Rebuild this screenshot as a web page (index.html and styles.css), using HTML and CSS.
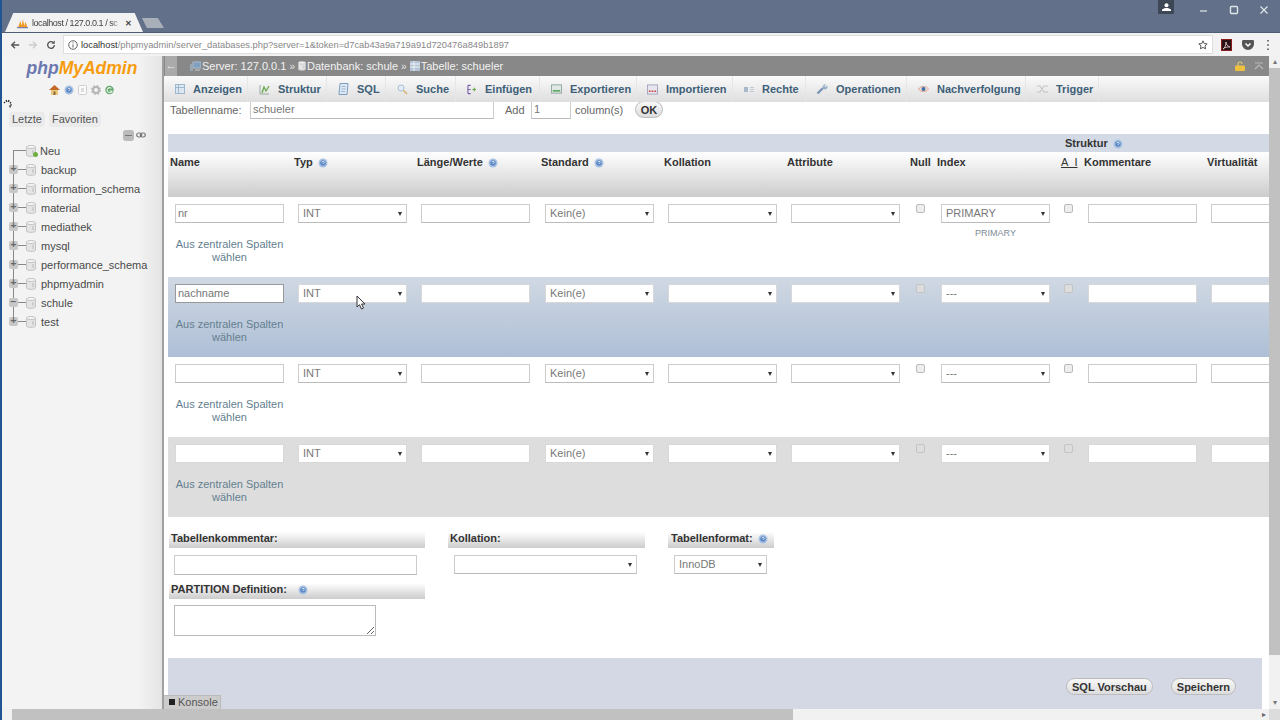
FILE: index.html
```html
<!DOCTYPE html>
<html lang="de">
<head>
    <meta charset="UTF-8">
    <meta name="viewport" content="width=device-width, initial-scale=1.0">
    <title>localhost / 127.0.0.1 / schule / schueler</title>
    <link rel="stylesheet" href="styles.css">
</head>
<body>
    <svg class="defs" width="0" height="0">
        <symbol id="help" viewBox="0 0 10 10">
            <circle cx="5" cy="5" r="4.5" fill="#a9c2e2"/>
            <circle cx="5" cy="5" r="2.8" fill="#5c8ac6"/>
            <path d="M3.8 4.200c.3-1.200 2.400-1.100 2.400.1 0 .8-1.200.8-1.200 1.600" fill="none" stroke="#fff" stroke-width=".8"/>
        </symbol>
        <symbol id="db" viewBox="0 0 10 12">
            <path d="M.5 2v8c0 1.800 9 1.800 9 0V2z" fill="#e4e4e4" stroke="#c4c4c4"/>
            <ellipse cx="5" cy="2" rx="4.5" ry="1.600" fill="#f4f4f4" stroke="#c4c4c4"/>
            <path d="M6 5h2v4H6z" fill="#cfcfcf"/>
        </symbol>
    </svg>

    <div class="titlebar">
        <div class="tab">
            <svg class="favicon" width="11" height="11" viewBox="0 0 13 12">
                <path d="M1 11 4 3l2 8zM5 11l2-10 2 10zM8 11l2-7 2.500 7z" fill="#f29a1e"/>
                <path d="M0 11h13" stroke="#7b7fa8" stroke-width="1.500"/>
            </svg>
            <span class="tabTitle">localhost / 127.0.0.1 / sc</span>
            <span class="tabClose">&#x2715;</span>
        </div>
        <div class="newTab"></div>
        <div class="windowControls">
            <div class="profile">
                <svg width="9" height="8" viewBox="0 0 9 8"><circle cx="4.500" cy="2.200" r="2" fill="#fff"/><path d="M0 8V6.500L3 5h3l3 1.500V8z" fill="#fff"/></svg>
            </div>
            <svg class="winIcon" width="10" height="10" viewBox="0 0 10 10"><path d="M1 6h7" stroke="#dfe4ea" stroke-width="1.200"/></svg>
            <svg class="winIcon" width="10" height="10" viewBox="0 0 10 10"><rect x="1.500" y="1.500" width="7" height="7" rx="1" fill="none" stroke="#dfe4ea" stroke-width="1.400"/></svg>
            <svg class="winIcon" width="10" height="10" viewBox="0 0 10 10"><path d="M1.500 1.500l7 7M8.500 1.500l-7 7" stroke="#dfe4ea" stroke-width="1.200"/></svg>
        </div>
    </div>

    <div class="toolbar">
        <svg class="navIcon" width="10" height="10" viewBox="0 0 12 12"><path d="M11 6H2M6 2 2 6l4 4" fill="none" stroke="#555" stroke-width="1.600"/></svg>
        <svg class="navIcon" width="10" height="10" viewBox="0 0 12 12"><path d="M1 6h9M6 2l4 4-4 4" fill="none" stroke="#ccc" stroke-width="1.600"/></svg>
        <svg class="navIcon" width="10" height="10" viewBox="0 0 12 12"><path d="M10 6a4 4 0 1 1-1.300-3" fill="none" stroke="#555" stroke-width="1.600"/><path d="M10.500 .5v4h-4z" fill="#555"/></svg>
        <div class="urlBox">
            <svg class="urlInfo" width="10" height="10" viewBox="0 0 11 11"><circle cx="5.500" cy="5.500" r="4.700" fill="none" stroke="#555"/><path d="M5.500 4.800v3.500M5.500 2.500v1.200" stroke="#555"/></svg>
            <span class="url"><b>localhost</b>/phpmyadmin/server_databases.php?server=1&amp;token=d7cab43a9a719a91d720476a849b1897</span>
            <svg class="star" width="10" height="10" viewBox="0 0 12 12"><path d="M6 1l1.500 3.300 3.500.4-2.600 2.400.7 3.500L6 8.900 2.900 10.600l.7-3.500L1 4.700l3.500-.4z" fill="none" stroke="#555" stroke-width="1.200"/></svg>
        </div>
        <div class="extensions">
            <svg width="11" height="12" viewBox="0 0 11 12"><rect width="11" height="12" fill="#8c1c1c"/><rect x="1" y="1" width="9" height="10" fill="#2a1216"/><path d="M2 10c2-1 3-4 3-7 0 3 2 4 4 5-3-.3-5 .3-7 2z" fill="none" stroke="#f3dede" stroke-width=".8"/></svg>
            <svg width="12" height="10" viewBox="0 0 12 10"><path d="M0 1.500C0 .5.500 0 1.500 0h9c1 0 1.500.5 1.500 1.500V4c0 3-3 6-6 6S0 7 0 4z" fill="#555"/><path d="M3.500 3.500 6 6l2.500-2.500" fill="none" stroke="#fff" stroke-width="1.500"/></svg>
            <svg width="4" height="12" viewBox="0 0 4 12"><path d="M2 1v1.500M2 5.200v1.500M2 9.400v1.500" stroke="#555" stroke-width="1.600"/></svg>
        </div>
    </div>

    <div class="page">
        <div class="panes">
            <div class="nav">
                <div class="logo"><span class="logoPhp">php</span><span class="logoName">MyAdmin</span></div>
                <div class="navLinks">
                    <svg width="11" height="10" viewBox="0 0 11 10"><path d="M0 5 5.500 0 11 5z" fill="#c6682a"/><path d="M2 5h7v5H2z" fill="#e8c87a"/><path d="M4.500 6.500h2V10h-2z" fill="#8a6a3a"/></svg>
                    <svg width="10" height="10"><use href="#help"/></svg>
                    <svg width="9" height="10" viewBox="0 0 9 10"><rect x=".5" y=".5" width="8" height="9" rx="1" fill="#fafafa" stroke="#cfcfcf"/><path d="M3 3h3v4H3z" fill="#ddd"/></svg>
                    <svg width="10" height="10" viewBox="0 0 10 10"><circle cx="5" cy="5" r="3" fill="none" stroke="#b5b5b5" stroke-width="2"/><circle cx="5" cy="5" r="4.300" fill="none" stroke="#b5b5b5" stroke-width="1.400" stroke-dasharray="1.700 1.700"/></svg>
                    <svg width="9" height="10" viewBox="0 0 9 10"><circle cx="4.500" cy="5" r="4.200" fill="#5fa86a"/><path d="M6.500 3.500A2.500 2.500 0 1 0 7 6H4.500" fill="none" stroke="#e8f3e8" stroke-width="1.100"/></svg>
                </div>
                <svg class="spinner" width="10" height="9" viewBox="0 0 10 9"><path d="M1 3l1 1M3 1l1 2M6 1 5.500 3M8 3 7 4.500M9 6H7M7.500 8.500 6.500 6.500" stroke="#222" stroke-width="1.200"/></svg>
                <div class="navTabs">
                    <span class="navTab">Letzte</span>
                    <span class="navTab">Favoriten</span>
                </div>
                <div class="treeTools">
                    <span class="collapseAll"></span>
                    <svg width="10" height="6" viewBox="0 0 10 6"><rect x=".7" y="1" width="5" height="4" rx="2" fill="none" stroke="#777" stroke-width="1.200"/><rect x="4.300" y="1" width="5" height="4" rx="2" fill="none" stroke="#777" stroke-width="1.200"/></svg>
                </div>
                <ul class="tree">
                    <li class="treeFirst"><span class="expanderEmpty"></span><svg class="dbIcon" width="10" height="12"><use href="#db"/></svg><span class="newDot"></span><span class="treeLabel treeLabelNew">Neu</span></li>
                    <li><span class="expander">+</span><svg class="dbIcon" width="10" height="12"><use href="#db"/></svg><span class="treeLabel">backup</span></li>
                    <li><span class="expander">+</span><svg class="dbIcon" width="10" height="12"><use href="#db"/></svg><span class="treeLabel">information_schema</span></li>
                    <li><span class="expander">+</span><svg class="dbIcon" width="10" height="12"><use href="#db"/></svg><span class="treeLabel">material</span></li>
                    <li><span class="expander">+</span><svg class="dbIcon" width="10" height="12"><use href="#db"/></svg><span class="treeLabel">mediathek</span></li>
                    <li><span class="expander">+</span><svg class="dbIcon" width="10" height="12"><use href="#db"/></svg><span class="treeLabel">mysql</span></li>
                    <li><span class="expander">+</span><svg class="dbIcon" width="10" height="12"><use href="#db"/></svg><span class="treeLabel">performance_schema</span></li>
                    <li><span class="expander">+</span><svg class="dbIcon" width="10" height="12"><use href="#db"/></svg><span class="treeLabel">phpmyadmin</span></li>
                    <li><span class="expander">&minus;</span><svg class="dbIcon" width="10" height="12"><use href="#db"/></svg><span class="treeLabel">schule</span></li>
                    <li class="treeLast"><span class="expander">+</span><svg class="dbIcon" width="10" height="12"><use href="#db"/></svg><span class="treeLabel">test</span></li>
                </ul>
            </div>

            <div class="main">
                <div class="breadcrumb">
                    <span class="navToggle">&#x2190;</span>
                    <svg class="crumbIcon" width="11" height="10" viewBox="0 0 11 10"><rect x="3" y="1" width="8" height="6" fill="#7f9fbf" stroke="#a9bccf"/><rect x="0" y="3" width="3" height="7" fill="#9aa6b2"/><path d="M5 9h5" stroke="#ccc"/></svg>
                    <span>Server: 127.0.0.1</span>
                    <span class="crumbSep">&raquo;</span>
                    <svg class="crumbIcon" width="8" height="10"><use href="#db"/></svg>
                    <span>Datenbank: schule</span>
                    <span class="crumbSep">&raquo;</span>
                    <svg class="crumbIcon" width="10" height="10" viewBox="0 0 10 10"><rect width="10" height="10" fill="#b4c4d6"/><path d="M0 3h10M0 6h10M4 0v10" stroke="#eef2f6"/></svg>
                    <span>Tabelle: schueler</span>
                    <span class="crumbRight">
                        <svg width="10" height="10" viewBox="0 0 10 10"><path d="M3 5V3a2 2 0 0 1 4 0" fill="none" stroke="#e5c56a" stroke-width="1.200"/><rect y="4.500" width="10" height="5.500" rx="1" fill="#eec13c"/></svg>
                        <svg width="10" height="8" viewBox="0 0 10 8"><path d="M1 1h8M1 7l4-4 4 4" fill="none" stroke="#b8b8b8" stroke-width="1.200"/></svg>
                    </span>
                </div>

                <div class="tabs">
                    <a class="pmaTab tabAnzeigen"><svg width="10" height="10" viewBox="0 0 10 10"><rect x=".5" y=".5" width="9" height="9" fill="#dde8f3" stroke="#9db7cf"/><path d="M.5 3.500h9M3.500 .5v9" stroke="#9db7cf"/></svg>Anzeigen</a>
                    <a class="pmaTab tabStruktur"><svg width="11" height="11" viewBox="0 0 11 11"><path d="M1 1v9h9" fill="none" stroke="#9aa9a0"/><path d="M3 9l2-6 2 4 3-5" fill="none" stroke="#6aa84f" stroke-width="1.300"/></svg>Struktur</a>
                    <a class="pmaTab tabSql"><svg width="11" height="12" viewBox="0 0 11 12"><path d="M2 .5h8L9 11.500H1z" fill="#dce8f5" stroke="#7d9dc0"/><path d="M3.500 3.500h4M3.500 6h4M3 8.500h4" stroke="#9db7cf"/></svg>SQL</a>
                    <a class="pmaTab tabSuche"><svg width="11" height="11" viewBox="0 0 11 11"><circle cx="4" cy="4" r="3" fill="#e4eef8" stroke="#a8bdd2"/><path d="M6.500 6.500l3.500 3.500" stroke="#d8b070" stroke-width="1.600"/></svg>Suche</a>
                    <a class="pmaTab tabEinfuegen"><svg width="10" height="11" viewBox="0 0 11 11"><path d="M1 1v9M1 1h3M1 5.500h3M1 10h3" fill="none" stroke="#7a5fa8" stroke-width="1.200"/><path d="M6 5.500h4M8 3.500v4" stroke="#6aa84f" stroke-width="1.300"/></svg>Einfügen</a>
                    <a class="pmaTab tabExportieren"><svg width="11" height="10" viewBox="0 0 12 10"><rect x=".5" y=".5" width="11" height="9" fill="#dfe8e4" stroke="#8ea59c"/><path d="M2 7h8" stroke="#4f9f4f" stroke-width="1.600"/></svg>Exportieren</a>
                    <a class="pmaTab tabImportieren"><svg width="11" height="11" viewBox="0 0 12 11"><rect x=".5" y=".5" width="11" height="10" fill="#e6e6ef" stroke="#a3a3bb"/><path d="M2 7.500h8" stroke="#d04848" stroke-width="1.600" stroke-dasharray="2 1"/></svg>Importieren</a>
                    <a class="pmaTab tabRechte"><svg width="10" height="7" viewBox="0 0 10 7"><rect y="1" width="4" height="5" fill="#a5b8cc"/><path d="M6 1.500h4M6 3.500h4M6 5.500h4" stroke="#c0ccd8"/></svg>Rechte</a>
                    <a class="pmaTab tabOperationen"><svg width="12" height="12" viewBox="0 0 12 12"><path d="M1.500 10.500 7 5" stroke="#7d97b8" stroke-width="2.400"/><path d="M7 5a2.500 2.500 0 0 1 3-3.500L8.500 3l1 1L11 2.500A2.500 2.500 0 0 1 7.500 6z" fill="#9cb1c9"/></svg>Operationen</a>
                    <a class="pmaTab tabNachverfolgung"><svg width="11" height="8" viewBox="0 0 11 8"><path d="M.5 4C3 .5 8 .5 10.500 4 8 7.500 3 7.500 .5 4z" fill="#f3e3df" stroke="#dba28e"/><circle cx="5.500" cy="4" r="2" fill="#3f6fa8"/></svg>Nachverfolgung</a>
                    <a class="pmaTab tabTrigger"><svg width="11" height="8" viewBox="0 0 11 8"><path d="M0 1h3l4 6h4M0 7h3l4-6h4" fill="none" stroke="#c4c4c4" stroke-width="1.100"/></svg>Trigger</a>
                </div>

                <div class="nameLine">
                    <label class="nameLabel" for="tableName">Tabellenname:</label>
                    <input class="field nameField" id="tableName" type="text" value="schueler">
                    <span class="addLabel">Add</span>
                    <input class="field addField" type="text" value="1">
                    <span class="columnsLabel">column(s)</span>
                    <button class="btn okBtn">OK</button>
                </div>

                <table class="columns">
                    <colgroup>
                        <col class="colWide"><col class="colWide"><col class="colWide124"><col class="colWide"><col class="colWide"><col class="colAttr">
                        <col class="colNull"><col class="colIndex"><col class="colAi"><col class="colWide"><col class="colWide">
                    </colgroup>
                    <thead>
                        <tr class="bandRow">
                            <th colspan="8"></th>
                            <th colspan="3" class="strukturHead">Struktur <svg class="helpIcon strukturHelp" width="10" height="10"><use href="#help"/></svg></th>
                        </tr>
                        <tr class="headRow">
                            <th class="nameHead">Name</th>
                            <th>Typ <svg class="helpIcon" width="10" height="10"><use href="#help"/></svg></th>
                            <th>Länge/Werte <svg class="helpIcon" width="10" height="10"><use href="#help"/></svg></th>
                            <th>Standard <svg class="helpIcon" width="10" height="10"><use href="#help"/></svg></th>
                            <th>Kollation</th>
                            <th>Attribute</th>
                            <th class="nullHead">Null</th>
                            <th>Index</th>
                            <th class="aiHead"><u>A_I</u></th>
                            <th>Kommentare</th>
                            <th>Virtualität</th>
                        </tr>
                    </thead>
                    <tbody>
                        <tr class="rowPlain">
                            <td><input class="field" type="text" value="nr"><a class="central">Aus zentralen Spalten wählen</a></td>
                            <td><select class="field"><option>INT</option></select></td>
                            <td><input class="field" type="text"></td>
                            <td><select class="field"><option>Kein(e)</option></select></td>
                            <td><select class="field"><option></option></select></td>
                            <td><select class="field"><option></option></select></td>
                            <td class="checkCell"><input class="check" type="checkbox"></td>
                            <td><select class="field"><option>PRIMARY</option></select><span class="indexNote">PRIMARY</span></td>
                            <td class="checkCell aiCell"><input class="check" type="checkbox"></td>
                            <td><input class="field" type="text"></td>
                            <td><input class="field" type="text"></td>
                        </tr>
                        <tr class="rowHover">
                            <td><input class="field fieldActive" type="text" value="nachname"><a class="central">Aus zentralen Spalten wählen</a></td>
                            <td><select class="field"><option>INT</option></select></td>
                            <td><input class="field" type="text"></td>
                            <td><select class="field"><option>Kein(e)</option></select></td>
                            <td><select class="field"><option></option></select></td>
                            <td><select class="field"><option></option></select></td>
                            <td class="checkCell"><input class="check" type="checkbox"></td>
                            <td><select class="field"><option>---</option></select></td>
                            <td class="checkCell aiCell"><input class="check" type="checkbox"></td>
                            <td><input class="field" type="text"></td>
                            <td><input class="field" type="text"></td>
                        </tr>
                        <tr class="rowPlain">
                            <td><input class="field" type="text"><a class="central">Aus zentralen Spalten wählen</a></td>
                            <td><select class="field"><option>INT</option></select></td>
                            <td><input class="field" type="text"></td>
                            <td><select class="field"><option>Kein(e)</option></select></td>
                            <td><select class="field"><option></option></select></td>
                            <td><select class="field"><option></option></select></td>
                            <td class="checkCell"><input class="check" type="checkbox"></td>
                            <td><select class="field"><option>---</option></select></td>
                            <td class="checkCell aiCell"><input class="check" type="checkbox"></td>
                            <td><input class="field" type="text"></td>
                            <td><input class="field" type="text"></td>
                        </tr>
                        <tr class="rowGrey">
                            <td><input class="field" type="text"><a class="central">Aus zentralen Spalten wählen</a></td>
                            <td><select class="field"><option>INT</option></select></td>
                            <td><input class="field" type="text"></td>
                            <td><select class="field"><option>Kein(e)</option></select></td>
                            <td><select class="field"><option></option></select></td>
                            <td><select class="field"><option></option></select></td>
                            <td class="checkCell"><input class="check" type="checkbox"></td>
                            <td><select class="field"><option>---</option></select></td>
                            <td class="checkCell aiCell"><input class="check" type="checkbox"></td>
                            <td><input class="field" type="text"></td>
                            <td><input class="field" type="text"></td>
                        </tr>
                    </tbody>
                </table>

                <div class="options">
                    <div class="optionsLeft">
                        <div class="optionHead">Tabellenkommentar:</div>
                        <input class="field commentField" type="text">
                        <div class="optionHead partitionHead">PARTITION Definition: <svg class="helpIcon partitionHelp" width="10" height="10"><use href="#help"/></svg></div>
                        <textarea class="partitionField"></textarea>
                    </div>
                    <div class="optionsCollation">
                        <div class="optionHead">Kollation:</div>
                        <select class="field collationField"><option></option></select>
                    </div>
                    <div class="optionsEngine">
                        <div class="optionHead">Tabellenformat: <svg class="helpIcon" width="10" height="10"><use href="#help"/></svg></div>
                        <select class="field engineField"><option>InnoDB</option></select>
                    </div>
                </div>

                <div class="footerBand">
                    <button class="btn">SQL Vorschau</button>
                    <button class="btn">Speichern</button>
                </div>

                <div class="console"><span class="consoleIcon"></span>Konsole</div>
                <svg class="cursor" width="10" height="15" viewBox="0 0 10 15"><path d="M1 1v11l2.500-2.300L5.500 14l2-1-2-4H9z" fill="#fff" stroke="#333"/></svg>
            </div>

            <div class="vscroll">
                <span class="scrollArrow">&#x25B4;</span>
                <div class="vthumb"></div>
                <span class="scrollArrow scrollArrowDown">&#x25BE;</span>
            </div>
        </div>

        <div class="hscroll">
            <div class="hthumb"></div>
            <span class="hArrow">&#x25B8;</span>
            <div class="corner"></div>
        </div>
    </div>
</body>
</html>
```

FILE: styles.css
```css
* {
    box-sizing: border-box;
}

html, body {
    margin: 0;
    height: 720px;
    overflow: hidden;
}

body {
    display: flex;
    flex-direction: column;
    background-color: white;
    font-family: "Liberation Sans", Arial, sans-serif;
    font-size: 11px;
    color: #444;
}

.defs {
    display: block;
    height: 0;
}

/* browser */

.titlebar {
    display: flex;
    align-items: flex-end;
    height: 32px;
    flex: none;
    padding-left: 3px;
    background-color: #627189;
    border-left: 2px solid #1f5590;
}

.tab {
    display: flex;
    align-items: center;
    width: 138px;
    height: 19px;
    padding: 1px 0 0 12px;
    background-color: #f2f2f2;
    clip-path: polygon(0 100%, 6% 0, 94% 0, 100% 100%);
    font-size: 9px;
    letter-spacing: -.45px;
    color: #444;
}

.favicon {
    flex: none;
    margin-right: 4px;
}

.tabTitle {
    width: 90px;
    white-space: nowrap;
    mask-image: linear-gradient(to right, black 88%, transparent);
}

.tabClose {
    margin-left: 3px;
    font-size: 8px;
    font-weight: bold;
}

.newTab {
    width: 22px;
    height: 10px;
    margin: 0 0 4px -1px;
    background-color: #a9afb9;
    clip-path: polygon(0 0, 72% 0, 100% 100%, 22% 100%);
}

.windowControls {
    display: flex;
    align-self: flex-start;
    margin-left: auto;
    padding-right: 1px;
}

.profile {
    display: flex;
    align-items: center;
    justify-content: center;
    width: 16px;
    height: 14px;
    margin-right: 15px;
    background-color: #3d4756;
}

.winIcon {
    margin: 5px 10px 0;
}

.toolbar {
    display: flex;
    align-items: center;
    height: 24px;
    flex: none;
    padding-left: 8px;
    background-color: #f2f2f2;
    border-left: 2px solid #1f5590;
    border-top: 1px solid #4f5d72;
}

.navIcon {
    margin-right: 8px;
    flex: none;
}

.urlBox {
    display: flex;
    align-items: center;
    width: 1150px;
    height: 19px;
    flex: none;
    margin-left: -1px;
    padding: 0 4px;
    background-color: white;
    border: 1px solid #dedede;
}

.urlInfo {
    flex: none;
}

.url {
    margin-left: 3px;
    font-size: 9.3px;
    color: #888;
    white-space: nowrap;
}

.url b {
    font-weight: normal;
    color: #333;
}

.star {
    margin-left: auto;
}

.extensions {
    display: flex;
    align-items: center;
    gap: 10px;
    margin-left: 8px;
}

.extensions svg:last-child {
    margin-left: 2px;
}

/* panes */

.page {
    display: flex;
    flex-direction: column;
    flex: 1;
    min-height: 0;
    border-left: 2px solid #1f5590;
}

.panes {
    display: flex;
    flex: 1;
    min-height: 0;
}

.nav {
    display: flex;
    flex-direction: column;
    width: 162px;
    flex: none;
    background: linear-gradient(to right, #f3f3f3 85%, #e4e4e4);
    border-right: 2px solid #a0a0a0;
    overflow: hidden;
}

.logo {
    margin-top: 1px;
    text-align: center;
    font-size: 17.5px;
    font-weight: bold;
    font-style: italic;
    line-height: 22px;
}

.logoPhp {
    color: #6c78af;
}

.logoName {
    color: #f89c0e;
}

.navLinks {
    display: flex;
    justify-content: center;
    gap: 4px;
    margin-top: 6px;
    padding-right: 2px;
}

.spinner {
    margin: 4px 0 0 1px;
}

.navTabs {
    display: flex;
    gap: 4px;
    margin: 4px 0 0 7px;
}

.navTab {
    padding: 0 3px;
    line-height: 15px;
    color: #555;
    background-color: #ebebeb;
    border-radius: 3px;
}

.treeTools {
    display: flex;
    align-items: center;
    justify-content: flex-end;
    gap: 2px;
    height: 12px;
    margin: 2px 16px 0 0;
}

.collapseAll {
    width: 11px;
    height: 11px;
    background: linear-gradient(#777, #777) center / 7px 1px no-repeat #bbb;
    border-radius: 3px;
}

.tree {
    margin: 0;
    padding: 0 0 0 7px;
    list-style: none;
}

.tree li {
    display: flex;
    align-items: center;
    height: 19px;
    background:
        linear-gradient(#888, #888) 4px 0 / 1px 100% no-repeat,
        linear-gradient(#888, #888) 4px 9px / 14px 1px no-repeat;
}

.tree .treeFirst {
    background:
        linear-gradient(#888, #888) 4px 9px / 1px 10px no-repeat,
        linear-gradient(#888, #888) 4px 9px / 14px 1px no-repeat;
}

.tree .treeLast {
    background:
        linear-gradient(#888, #888) 4px 0 / 1px 10px no-repeat,
        linear-gradient(#888, #888) 4px 9px / 14px 1px no-repeat;
}

.expander, .expanderEmpty {
    flex: none;
    width: 9px;
    height: 9px;
    line-height: 8px;
    text-align: center;
    font-size: 10px;
    font-weight: bold;
    color: #666;
    background-color: #c8c8c8;
    border-radius: 2px;
}

.expanderEmpty {
    visibility: hidden;
}

.dbIcon {
    flex: none;
    margin-left: 8px;
}

.newDot {
    width: 5px;
    height: 5px;
    margin: 7px 0 0 -3px;
    background-color: #6fae3f;
    border-radius: 50%;
    flex: none;
}

.treeLabel {
    margin-left: 5px;
    color: #4a4a4a;
    white-space: nowrap;
}

.treeLabelNew {
    margin-left: 2px;
}

.main {
    position: relative;
    display: flex;
    flex-direction: column;
    flex: 1;
    min-width: 0;
    overflow: hidden;
}

.breadcrumb {
    display: flex;
    align-items: center;
    height: 20px;
    flex: none;
    background-color: #888;
    color: #f2f2f2;
}

.navToggle {
    width: 12px;
    height: 20px;
    margin: 0 13px 0 1px;
    line-height: 18px;
    text-align: center;
    background-color: #aaa;
    color: #eee;
}

.crumbIcon {
    flex: none;
    margin-right: 1px;
}

.crumbSep {
    margin: 0 3px;
    font-size: 10px;
    color: #e4e4e4;
}

.crumbRight {
    display: flex;
    align-items: center;
    gap: 9px;
    margin-left: auto;
    padding-right: 5px;
}

.tabs {
    position: relative;
    z-index: 1;
    display: flex;
    height: 26px;
    flex: none;
    background: linear-gradient(#fafafa, #dedede);
}

.pmaTab {
    display: flex;
    align-items: center;
    gap: 8px;
    padding-left: 11px;
    font-weight: bold;
    color: #3d6078;
    border-right: 1px solid #e6e6e6;
    white-space: nowrap;
}

.tabAnzeigen { width: 84px; }
.tabStruktur { width: 79px; }
.tabSql { width: 59px; }
.tabSuche { width: 70px; }
.tabEinfuegen { width: 84px; }
.tabExportieren { width: 97px; }
.tabImportieren { width: 96px; padding-left: 10px; }
.tabRechte { width: 73px; }
.tabOperationen { width: 101px; padding-left: 10px; }
.tabNachverfolgung { width: 119px; }
.tabTrigger { width: 73px; }

.field {
    display: block;
    width: 109px;
    height: 19px;
    padding: 0 2px 1px;
    font-family: "Liberation Sans", Arial, sans-serif;
    font-size: 11px;
    color: #777;
    background-color: white;
    border: 1px solid #ccc;
    border-bottom-color: #bbb;
    outline: none;
}

select.field {
    appearance: none;
    padding: 0 4px 1px;
    background-image: url("data:image/svg+xml,%3Csvg xmlns='http://www.w3.org/2000/svg' width='4' height='4'%3E%3Cpath d='M0 0h4L2 4z' fill='%23333'/%3E%3C/svg%3E");
    background-repeat: no-repeat;
    background-position: right 4px center;
}

.fieldActive {
    border-color: #999;
}

.btn {
    height: 17px;
    padding: 0 5px;
    font-family: "Liberation Sans", Arial, sans-serif;
    font-size: 11px;
    font-weight: bold;
    color: #333;
    background: linear-gradient(#f8f8f8, #dcdcdc);
    border: 1px solid #bbb;
    border-radius: 9px;
}

.nameLine {
    display: flex;
    align-items: center;
    height: 19px;
    flex: none;
    margin-top: -2px;
    padding-left: 6px;
    color: #666;
}

.nameLabel {
    width: 70px;
}

.nameField {
    width: 244px;
    margin-left: 10px;
}

.addLabel {
    width: 20px;
    margin-left: 11px;
}

.addField {
    width: 40px;
    margin: 0 4px 0 6px;
}

.columnsLabel {
    width: 50px;
}

.okBtn {
    width: 28px;
    margin-left: 10px;
    padding: 0;
}

/* columns table */

.columns {
    flex: none;
    width: 1159px;
    margin: 15px 0 0 4px;
    table-layout: fixed;
    border-collapse: collapse;
}

.colWide { width: 123px; }
.colWide124 { width: 124px; }
.colAttr { width: 120px; }
.colNull { width: 30px; }
.colIndex { width: 124px; }
.colAi { width: 23px; }

.columns th {
    padding: 0 0 0 3px;
    text-align: left;
    color: #333;
    white-space: nowrap;
}

.bandRow {
    height: 18px;
    background-color: #d3dae5;
}

.columns .strukturHead {
    padding-left: 7px;
}

.strukturHelp {
    margin-left: 3px;
}

.headRow {
    height: 45px;
    background: linear-gradient(#fff, #ccc);
}

.headRow th {
    vertical-align: top;
    padding-top: 4px;
}

.columns .nameHead {
    padding-left: 2px;
}

.columns .nullHead {
    padding-left: 6px;
}

.aiHead u {
    font-weight: normal;
}

.helpIcon {
    margin-left: 2px;
    vertical-align: -2px;
}

.columns td {
    height: 80px;
    padding: 7px 0 0 7px;
    vertical-align: top;
}

.columns .checkCell {
    padding-left: 12px;
}

.columns .aiCell {
    padding-left: 6px;
}

.check {
    appearance: none;
    display: block;
    width: 9px;
    height: 9px;
    margin: 0;
    background-color: #eee;
    border: 1px solid #bbb;
    border-radius: 2px;
}

.central {
    display: block;
    width: 109px;
    margin-top: 15px;
    text-align: center;
    line-height: 13px;
    color: #64808f;
}

.indexNote {
    display: block;
    width: 109px;
    margin-top: 5px;
    font-size: 9px;
    text-align: center;
    color: #7c8a96;
}

.rowPlain {
    background-color: white;
}

.rowHover {
    background: linear-gradient(#d0d8e3, #aebfd6);
}

.rowGrey {
    background-color: #ddd;
}

.rowHover .field, .rowGrey .field {
    border-color: #d8d8d8;
}

.rowHover .fieldActive {
    border-color: #999;
}

.rowHover .check, .rowGrey .check {
    border-color: #c4c4c4;
    background-color: #ddd;
}

/* options under the table */

.options {
    display: flex;
    flex: none;
    margin: 15px 0 0 5px;
}

.optionHead {
    height: 16px;
    padding-left: 2px;
    line-height: 13px;
    font-weight: bold;
    color: #333;
    background: linear-gradient(#fff, #ccc);
    white-space: nowrap;
}

.optionsLeft {
    width: 256px;
}

.commentField {
    width: 243px;
    height: 20px;
    margin: 7px 0 0 5px;
}

.partitionHead {
    margin-top: 8px;
}

.partitionHelp {
    margin-left: 8px;
}

.partitionField {
    display: block;
    width: 202px;
    height: 31px;
    margin: 6px 0 0 5px;
    background-color: white;
    border: 1px solid #bbb;
    outline: none;
}

.optionsCollation {
    width: 197px;
    margin-left: 23px;
}

.collationField {
    width: 183px;
    margin: 7px 0 0 6px;
}

.optionsEngine {
    width: 106px;
    margin-left: 23px;
}

.optionsEngine .optionHead {
    padding-left: 3px;
}

.engineField {
    width: 93px;
    margin: 7px 0 0 6px;
}

.footerBand {
    display: flex;
    justify-content: flex-end;
    align-items: flex-start;
    gap: 18px;
    flex: 1;
    width: 1094px;
    margin: 22px 0 0 4px;
    padding: 20px 26px 0 0;
    background-color: #d3d8e4;
}

.console {
    position: absolute;
    left: -1px;
    bottom: 0;
    display: flex;
    align-items: center;
    height: 14px;
    padding: 0 2px 1px 5px;
    color: #555;
    background-color: #ccc;
    border: 1px solid #bbb;
    border-bottom: none;
}

.consoleIcon {
    width: 6px;
    height: 6px;
    margin-right: 3px;
    background-color: #222;
}

.cursor {
    position: absolute;
    left: 192px;
    top: 239px;
}

/* scrollbars */

.vscroll {
    display: flex;
    flex-direction: column;
    align-items: center;
    width: 11px;
    flex: none;
    background-color: #f1f1f1;
}

.scrollArrow {
    height: 12px;
    line-height: 12px;
    font-size: 8px;
    color: #777;
}

.scrollArrowDown {
    margin-top: auto;
}

.vthumb {
    width: 100%;
    height: 587px;
    background-color: #c1c1c1;
}

.hscroll {
    display: flex;
    align-items: center;
    height: 11px;
    flex: none;
    padding-left: 10px;
    background-color: #f1f1f1;
}

.hthumb {
    width: 781px;
    height: 100%;
    background-color: #c1c1c1;
}

.hArrow {
    margin-left: auto;
    font-size: 8px;
    color: #666;
}

.corner {
    width: 11px;
    height: 100%;
    margin-left: 3px;
    background-color: #dcdcdc;
}
```
